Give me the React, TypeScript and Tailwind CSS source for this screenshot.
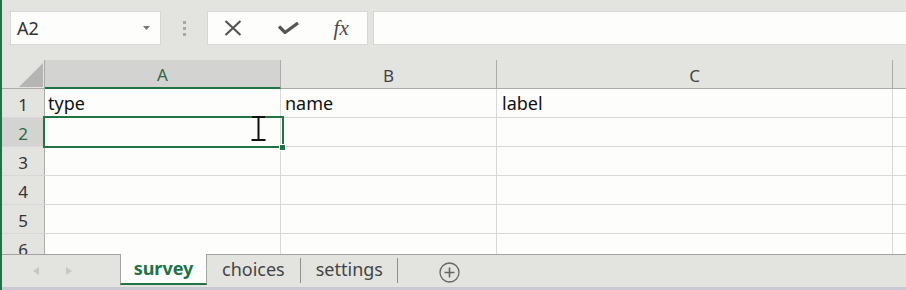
import React from "react";

function HeaderCell({ label, w, selected }: { label: string; w: string; selected?: boolean }) {
  return (
    <div
      className={`${w} shrink-0 h-full flex items-center justify-center pt-[3px] text-[17px] border-r border-[#ababab] ${
        selected ? "bg-[#d3d3d1] text-[#2d6a45] border-b-2 border-b-[#217346]" : "border-b border-b-[#ababab] text-[#444]"
      }`}
    >
      {label}
    </div>
  );
}

function Row({ n, cells, selected }: { n: number; cells: string[]; selected?: boolean }) {
  return (
    <div className="flex h-[29px] shrink-0 border-b border-[#d8d8da]">
      <div
        className={`w-[43px] shrink-0 flex items-center justify-center pt-[3px] text-[17px] border-r border-[#ababab] ${
          selected ? "bg-[#d3d3d1] text-[#2d6a45]" : "bg-[#e3e3e0] text-[#333]"
        }`}
      >
        {n}
      </div>
      <div className="w-[236px] shrink-0 border-r border-[#d8d8da] pl-[3px] leading-[28px] text-[18px] text-[#111]">{cells[0]}</div>
      <div className="w-[216px] shrink-0 border-r border-[#d8d8da] pl-[4px] leading-[28px] text-[18px] text-[#111]">{cells[1]}</div>
      <div className="w-[396px] shrink-0 border-r border-[#d8d8da] pl-[5px] leading-[28px] text-[18px] text-[#111]">{cells[2]}</div>
      <div className="flex-1" />
    </div>
  );
}

export default function App() {
  return (
    <div
      className="w-[906px] h-[290px] flex flex-col overflow-hidden border-l-2 border-[#217346] bg-[#e3e3e0]"
      style={{ fontFamily: '"Noto Sans", "Open Sans", sans-serif' }}
    >
      {/* Formula bar */}
      <div className="h-[60px] shrink-0 flex items-start pt-[11px] pl-[8px]">
        <div className="w-[151px] h-[34px] bg-[#fdfdfb] border border-[#d6d6d4] flex items-center pl-[6px] pr-[10px]">
          <span className="text-[18px] text-[#333] flex-1">A2</span>
          <svg width="7" height="4" viewBox="0 0 7 4">
            <path d="M0 0 L7 0 L3.5 4 Z" fill="#777" />
          </svg>
        </div>
        <div className="w-[46px] h-[34px] flex flex-col items-center justify-center gap-[3px]">
          <div className="w-[3px] h-[3px] bg-[#a8a8a8]" />
          <div className="w-[3px] h-[3px] bg-[#a8a8a8]" />
          <div className="w-[3px] h-[3px] bg-[#a8a8a8]" />
        </div>
        <div className="w-[161px] h-[34px] bg-[#fdfdfb] border border-[#d6d6d4] flex items-center">
          <div className="w-[54px] flex justify-center pr-[4px]">
            <svg width="18" height="16" viewBox="0 0 18 16">
              <path d="M1.5 1 L16.5 15 M16.5 1 L1.5 15" stroke="#555" strokeWidth="2.2" fill="none" />
            </svg>
          </div>
          <div className="w-[54px] flex justify-center">
            <svg width="21" height="12" viewBox="0 0 21 12">
              <path d="M1 4.5 L7 10.5 L20 1" stroke="#555" strokeWidth="3.2" fill="none" strokeLinejoin="miter" />
            </svg>
          </div>
          <div className="w-[52px] flex justify-center">
            <span
              className="italic text-[21px] text-[#4a4a4a] leading-none"
              style={{ fontFamily: '"Liberation Serif", "DejaVu Serif", serif' }}
            >
              fx
            </span>
          </div>
        </div>
        <div className="flex-1 ml-[5px] h-[34px] bg-[#fdfdfb] border-y border-l border-[#d6d6d4]" />
      </div>

      {/* Grid */}
      <div className="flex-1 relative overflow-hidden bg-[#fdfdfb]">
        <div className="flex h-[29px] bg-[#e3e3e0]">
          <div className="w-[43px] shrink-0 h-full border-r border-b border-[#ababab] relative">
            <svg className="absolute right-[1px] bottom-[1px]" width="24" height="24" viewBox="0 0 24 24">
              <path d="M24 0 L24 24 L0 24 Z" fill="#b5b5b3" />
            </svg>
          </div>
          <HeaderCell label="A" w="w-[236px]" selected />
          <HeaderCell label="B" w="w-[216px]" />
          <HeaderCell label="C" w="w-[396px]" />
          <div className="flex-1 h-full border-b border-[#ababab]" />
        </div>
        <Row n={1} cells={["type", "name", "label"]} />
        <Row n={2} cells={["", "", ""]} selected />
        <Row n={3} cells={["", "", ""]} />
        <Row n={4} cells={["", "", ""]} />
        <Row n={5} cells={["", "", ""]} />
        <Row n={6} cells={["", "", ""]} />

        {/* Selection */}
        <div className="absolute left-[41px] top-[56px] w-[241px] h-[32px] border-2 border-[#217346]" />
        <div className="absolute left-[277px] top-[84px] w-[7px] h-[7px] bg-[#217346] border border-white" />

        {/* I-beam cursor */}
        <svg className="absolute left-[248px] top-[56px]" width="17" height="26" viewBox="0 0 17 26">
          <path d="M2 1 L15 1 M8.5 1 L8.5 24 M1.5 24 L15.5 24" stroke="#111" strokeWidth="2" fill="none" />
        </svg>
      </div>

      {/* Sheet tabs */}
      <div className="h-[33px] shrink-0 flex bg-[#e3e3e0]">
        <div className="w-[118px] shrink-0 border-t border-[#a3a3a3] flex items-center pb-[1px]">
          <svg className="ml-[31px]" width="6" height="8" viewBox="0 0 6 8">
            <path d="M6 0 L0 4 L6 8 Z" fill="#c6c6c6" />
          </svg>
          <svg className="ml-[27px]" width="6" height="8" viewBox="0 0 6 8">
            <path d="M0 0 L6 4 L0 8 Z" fill="#c6c6c6" />
          </svg>
        </div>
        <div className="w-[87px] shrink-0 h-[31px] bg-[#fdfdfb] border-x border-[#a3a3a3] border-b-2 border-b-[#217346] flex justify-center leading-[29px] text-[18px] font-bold text-[#217346]">
          survey
        </div>
        <div className="flex-1 border-t border-[#a3a3a3] flex items-start">
          <div className="pl-[15px] pr-[15px] leading-[28px] text-[18px] text-[#444]">choices</div>
          <div className="w-px h-[25px] mt-[3px] bg-[#8e8e8e]" />
          <div className="pl-[15px] pr-[14px] leading-[28px] text-[18px] text-[#444]">settings</div>
          <div className="w-px h-[25px] mt-[3px] bg-[#8e8e8e]" />
          <svg className="ml-[41px] mt-[7px]" width="21" height="21" viewBox="0 0 21 21">
            <circle cx="10.5" cy="10.5" r="9.5" stroke="#666" strokeWidth="1.3" fill="none" />
            <path d="M10.5 5.5 L10.5 15.5 M5.5 10.5 L15.5 10.5" stroke="#666" strokeWidth="1.6" />
          </svg>
        </div>
      </div>
      <div className="h-[3px] shrink-0 bg-[#c9c9d4]" />
    </div>
  );
}
